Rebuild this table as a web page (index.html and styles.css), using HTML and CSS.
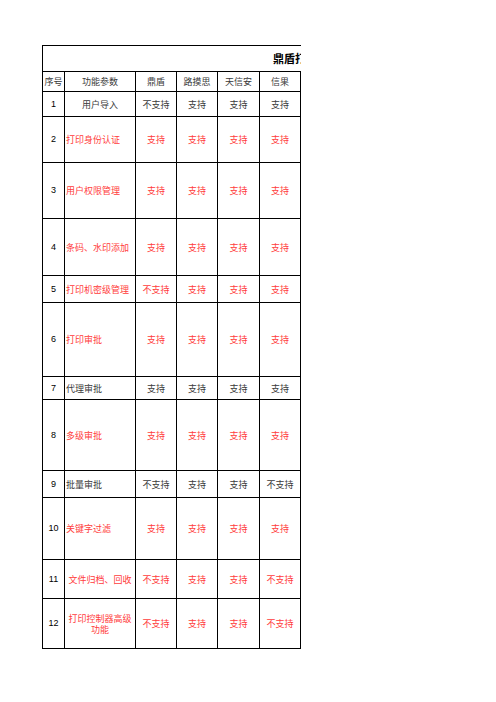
FILE: index.html
```html
<!DOCTYPE html>
<html lang="zh">
<head>
<meta charset="utf-8">
<title>鼎盾打印管控功能对比</title>
<link rel="stylesheet" href="styles.css">
</head>
<body>
<div class="sheet">
  <div class="cell title"><span>鼎盾打印管控功能对比表</span></div>

  <div class="cell">序号</div>
  <div class="cell">功能参数</div>
  <div class="cell">鼎盾</div>
  <div class="cell">路摸思</div>
  <div class="cell">天信安</div>
  <div class="cell">信果</div>

  <div class="cell num">1</div>
  <div class="cell">用户导入</div>
  <div class="cell">不支持</div>
  <div class="cell">支持</div>
  <div class="cell">支持</div>
  <div class="cell">支持</div>

  <div class="cell num">2</div>
  <div class="cell left red">打印身份认证</div>
  <div class="cell red">支持</div>
  <div class="cell red">支持</div>
  <div class="cell red">支持</div>
  <div class="cell red">支持</div>

  <div class="cell num">3</div>
  <div class="cell left red">用户权限管理</div>
  <div class="cell red">支持</div>
  <div class="cell red">支持</div>
  <div class="cell red">支持</div>
  <div class="cell red">支持</div>

  <div class="cell num">4</div>
  <div class="cell left red">条码、水印添加</div>
  <div class="cell red">支持</div>
  <div class="cell red">支持</div>
  <div class="cell red">支持</div>
  <div class="cell red">支持</div>

  <div class="cell num">5</div>
  <div class="cell left red">打印机密级管理</div>
  <div class="cell red">不支持</div>
  <div class="cell red">支持</div>
  <div class="cell red">支持</div>
  <div class="cell red">支持</div>

  <div class="cell num">6</div>
  <div class="cell left red">打印审批</div>
  <div class="cell red">支持</div>
  <div class="cell red">支持</div>
  <div class="cell red">支持</div>
  <div class="cell red">支持</div>

  <div class="cell num">7</div>
  <div class="cell left">代理审批</div>
  <div class="cell">支持</div>
  <div class="cell">支持</div>
  <div class="cell">支持</div>
  <div class="cell">支持</div>

  <div class="cell num">8</div>
  <div class="cell left red">多级审批</div>
  <div class="cell red">支持</div>
  <div class="cell red">支持</div>
  <div class="cell red">支持</div>
  <div class="cell red">支持</div>

  <div class="cell num">9</div>
  <div class="cell left">批量审批</div>
  <div class="cell">不支持</div>
  <div class="cell">支持</div>
  <div class="cell">支持</div>
  <div class="cell">不支持</div>

  <div class="cell num">10</div>
  <div class="cell left red">关键字过滤</div>
  <div class="cell red">支持</div>
  <div class="cell red">支持</div>
  <div class="cell red">支持</div>
  <div class="cell red">支持</div>

  <div class="cell num">11</div>
  <div class="cell red">文件归档、回收</div>
  <div class="cell red">不支持</div>
  <div class="cell red">支持</div>
  <div class="cell red">支持</div>
  <div class="cell red">不支持</div>

  <div class="cell num">12</div>
  <div class="cell red wrap">打印控制器高级功能</div>
  <div class="cell red">不支持</div>
  <div class="cell red">支持</div>
  <div class="cell red">支持</div>
  <div class="cell red">不支持</div>
</div>
</body>
</html>
```

FILE: styles.css
```css
html, body {
  margin: 0;
  padding: 0;
  background: #ffffff;
}

body {
  font-family: "Noto Sans CJK SC", "Liberation Sans", sans-serif;
  font-size: 9px;
  color: #3a3a3a;
}

.sheet {
  display: grid;
  width: max-content;
  margin: 45px 0 0 42px;
  border-top: 1px solid #000;
  border-left: 1px solid #000;
  grid-template-columns: 22px 71px 41px 41px 42px 41px;
  grid-template-rows: 26px 20px 25px 46px 56px 57px 27px 74px 23px 71px 27px 62px 39px 50px;
}

.cell {
  box-sizing: border-box;
  border-right: 1px solid #000;
  border-bottom: 1px solid #000;
  display: flex;
  align-items: center;
  justify-content: center;
  text-align: center;
  line-height: 11px;
  white-space: nowrap;
  overflow: hidden;
}

.title {
  grid-column: 1 / -1;
  border-right: 0;
  justify-content: flex-start;
  padding-left: 230px;
  font-size: 11px;
  font-weight: bold;
  color: #000;
}

.num {
  font-family: "Liberation Sans", "DejaVu Sans", sans-serif;
  font-size: 9px;
  color: #000;
}

.left {
  justify-content: flex-start;
  padding-left: 1px;
}

.red {
  color: #ff3c3c;
}

.wrap {
  white-space: normal;
  padding: 0 3px;
}
```
